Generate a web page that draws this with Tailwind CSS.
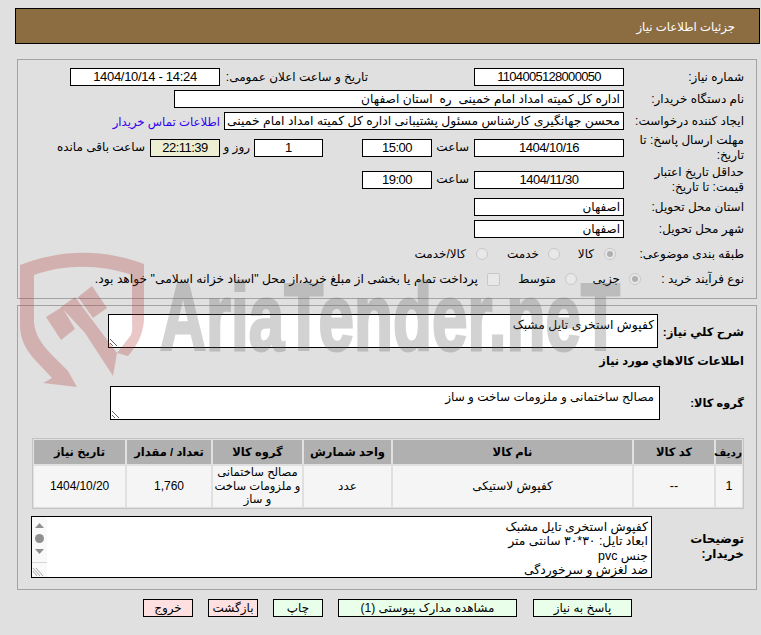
<!DOCTYPE html>
<html lang="fa" dir="rtl">
  <head>
    <meta charset="UTF-8" />
    <title>جزئیات اطلاعات نیاز</title>
    <script src="https://cdn.jsdelivr.net/npm/@tailwindcss/browser@4"></script>
  </head>
  <body class="relative h-[635px] overflow-hidden bg-[#e0e0e0] pt-2 text-[12px] leading-[15px] text-black [font-family:'Liberation_Sans','DejaVu_Sans',sans-serif]">
    <!-- header -->
    <div class="mr-px ml-[15px] flex h-9 items-center border border-black bg-[#8c6d42] pr-[24px] text-[11.7px] text-white">
      جزئیات اطلاعات نیاز
    </div>

    <!-- details -->
    <div class="mt-[15px] mr-1 ml-[17px] h-[240px] border border-[#a3a3a3] pt-2 pr-3">
      <div class="flex h-[18px] items-center">
        <div class="w-[120px]">شماره نیاز:</div>
        <div class="h-[18px] w-[150px] border border-black bg-white text-center text-[13px] leading-4 tracking-[-0.7px]">1104005128000050</div>
        <div class="mr-[106px] w-[148px] whitespace-nowrap">تاریخ و ساعت اعلان عمومی:</div>
        <div dir="ltr" class="h-[18px] w-[150px] border border-black bg-white text-center text-[13px] leading-4 tracking-[-0.3px]">1404/10/14 - 14:24</div>
      </div>

      <div class="mt-1 flex h-[18px] items-center">
        <div class="w-[120px]">نام دستگاه خریدار:</div>
        <div class="h-[18px] w-[450px] border border-black bg-white pr-[3px] text-[12.2px] leading-4">اداره کل کمیته امداد امام خمینی&nbsp; ره&nbsp; استان اصفهان</div>
      </div>

      <div class="mt-1 flex h-[18px] items-center">
        <div class="w-[120px]">ایجاد کننده درخواست:</div>
        <div class="h-[18px] w-[400px] overflow-hidden border border-black bg-white pr-[3px] text-[12.4px] leading-4 whitespace-nowrap">محسن جهانگیری کارشناس مسئول پشتیبانی اداره کل کمیته امداد امام خمینی</div>
        <a class="mr-1 text-[11.7px] whitespace-nowrap text-[#3300ee]">اطلاعات تماس خریدار</a>
      </div>

      <div class="mt-[4px] flex h-[27px] items-center">
        <div class="w-[120px]">مهلت ارسال پاسخ: تا تاریخ:</div>
        <div class="h-[18px] w-[150px] border border-black bg-white text-center text-[13px] leading-4 tracking-[-0.5px]">1404/10/16</div>
        <div class="w-[42px] pr-[5px]">ساعت</div>
        <div class="h-[18px] w-[70px] border border-black bg-white text-center text-[13px] leading-4 tracking-[-0.5px]">15:00</div>
        <div class="w-[39px]"></div>
        <div class="h-[18px] w-[69px] border border-black bg-white text-center text-[13px] leading-4">1</div>
        <div class="w-[34px] pr-[4px]">روز و</div>
        <div class="h-[18px] w-[70px] border border-black bg-[#eeeed2] text-center text-[13px] leading-4 tracking-[-0.5px]">22:11:39</div>
        <div class="pr-[5px] whitespace-nowrap">ساعت باقی مانده</div>
      </div>

      <div class="mt-[5px] flex h-[27px] items-center">
        <div class="w-[120px]">حداقل تاریخ اعتبار قیمت: تا تاریخ:</div>
        <div class="h-[18px] w-[150px] border border-black bg-white text-center text-[13px] leading-4 tracking-[-0.5px]">1404/11/30</div>
        <div class="w-[42px] pr-[5px]">ساعت</div>
        <div class="h-[18px] w-[70px] border border-black bg-white text-center text-[13px] leading-4 tracking-[-0.5px]">19:00</div>
      </div>

      <div class="mt-[5px] flex h-[18px] items-center">
        <div class="w-[120px]">استان محل تحویل:</div>
        <div class="h-[18px] w-[150px] border border-black bg-white pr-[3px] leading-4">اصفهان</div>
      </div>

      <div class="mt-1 flex h-[18px] items-center">
        <div class="w-[120px]">شهر محل تحویل:</div>
        <div class="h-[18px] w-[150px] border border-black bg-white pr-[3px] leading-4">اصفهان</div>
      </div>

      <div class="mt-[6px] flex h-[20px] items-center">
        <div class="w-[128px]">طبقه بندی موضوعی:</div>
        <div class="flex w-[56px] items-center gap-[10px]">
          <span class="flex size-3 items-center justify-center rounded-full border border-[#c8c8c8] bg-[#e8e8e8]"><span class="size-[6px] rounded-full bg-[#b0b0b0]"></span></span>
          <span>کالا</span>
        </div>
        <div class="flex w-[72px] items-center gap-[9px]">
          <span class="size-3 rounded-full border border-[#c8c8c8] bg-[#e8e8e8]"></span>
          <span>خدمت</span>
        </div>
        <div class="flex items-center gap-[10px]">
          <span class="size-3 rounded-full border border-[#c8c8c8] bg-[#e8e8e8]"></span>
          <span>کالا/خدمت</span>
        </div>
      </div>

      <div class="mt-[5px] flex h-[20px] items-center">
        <div class="w-[103px]">نوع فرآیند خرید :</div>
        <div class="flex w-[64px] items-center gap-[9px]">
          <span class="flex size-3 items-center justify-center rounded-full border border-[#c8c8c8] bg-[#e8e8e8]"><span class="size-[6px] rounded-full bg-[#b0b0b0]"></span></span>
          <span>جزیی</span>
        </div>
        <div class="flex w-[77px] items-center gap-[9px]">
          <span class="size-3 rounded-full border border-[#c8c8c8] bg-[#e8e8e8]"></span>
          <span>متوسط</span>
        </div>
        <div class="flex items-center gap-[9px]">
          <span class="size-[13px] rounded-[2px] border border-[#c8c8c8] bg-[#e8e8e8]"></span>
          <span class="text-[12.3px] whitespace-nowrap">پرداخت تمام یا بخشی از مبلغ خرید،از محل "اسناد خزانه اسلامی" خواهد بود.</span>
        </div>
      </div>
    </div>

    <!-- items -->
    <div class="mt-[6px] mr-1 ml-[17px] h-[285px] border border-[#a3a3a3] pt-2 pr-3">
      <div class="flex items-center">
        <div class="w-[86px] text-[11.7px] font-bold">شرح کلي نياز:</div>
        <textarea class="h-[34px] w-[550px] border border-black bg-white px-[3px] pt-[3px] text-[12.3px] leading-[15px]">کفپوش استخری تایل مشبک</textarea>
      </div>

      <div class="mt-[6px] h-4 text-[11.4px] font-bold">اطلاعات کالاهاي مورد نياز</div>

      <div class="mt-4 flex items-center">
        <div class="w-[84px] text-[11.4px] font-bold">گروه کالا:</div>
        <textarea class="h-[34px] w-[550px] border border-black bg-white px-[5px] pt-[3px] leading-[15px]">مصالح ساختمانی و ملزومات ساخت و ساز</textarea>
      </div>

      <table class="mt-[18px] w-[712px] table-fixed border-separate border-spacing-[2px] text-center ring-1 ring-[#c4c4c4] ring-inset">
        <thead>
          <tr class="h-[24px] bg-[#b0b0b0] text-[11.5px] font-bold">
            <th class="w-[26px] p-0 text-[10.5px]">ردیف</th>
            <th class="w-[80px] p-0">کد کالا</th>
            <th class="w-[239px] p-0">نام کالا</th>
            <th class="w-[87px] p-0">واحد شمارش</th>
            <th class="w-[89px] p-0">گروه کالا</th>
            <th class="w-[84px] p-0">تعداد / مقدار</th>
            <th class="p-0">تاریخ نیاز</th>
          </tr>
        </thead>
        <tbody>
          <tr class="h-[41px] bg-[#f5f5f5]">
            <td class="p-0 text-[12.5px]">1</td>
            <td class="p-0 text-[12.5px]">--</td>
            <td class="p-0">کفپوش لاستیکی</td>
            <td class="p-0">عدد</td>
            <td class="p-0 text-[11.5px] leading-[13.5px] whitespace-nowrap">مصالح ساختمانی<br />و ملزومات ساخت<br />و ساز</td>
            <td class="p-0 text-[12px]">1,760</td>
            <td class="p-0 text-[12px] tracking-[-0.1px]">1404/10/20</td>
          </tr>
        </tbody>
      </table>

      <div class="mt-[7px] flex items-center">
        <div class="w-[92px] font-bold"><div class="w-[60px]">توضیحات خریدار:</div></div>
        <div class="flex h-[62px] w-[621px] border border-black bg-white">
          <div class="flex-1 pt-[3px] pr-[3px] text-[12.4px] leading-[14.4px]">
            <div>کفپوش استخری تایل مشبک</div>
            <div>ابعاد تایل: ۳۰*۳۰ سانتی متر</div>
            <div>جنس pvc</div>
            <div>ضد لغزش و سرخوردگی</div>
          </div>
          <svg class="w-[15px] shrink-0 bg-[#f9f9f9]" width="15" height="60" viewBox="0 0 15 60">
            <path d="M3 11 L7.5 6 L12 11 Z" fill="#909090" />
            <circle cx="7.5" cy="21.5" r="4.5" fill="#909090" />
            <path d="M3 32 L12 32 L7.5 37 Z" fill="#909090" />
            <path d="M0 45.5 H15" stroke="#d8d8d8" />
            <path d="M1 51 L8 59 M1 54 L5 59 M4 51 L11 59" stroke="#808080" stroke-width="0.7" />
          </svg>
        </div>
      </div>
    </div>

    <!-- buttons -->
    <div class="mt-[9px] mr-[129px] flex gap-[15px]">
      <button class="h-[18px] w-[99px] border border-black bg-[#eaffea] leading-4">پاسخ به نیاز</button>
      <button class="mr-px h-[18px] w-[179px] border border-black bg-[#eaffea] leading-4">مشاهده مدارک پیوستی (1)</button>
      <button class="h-[18px] w-[50px] border border-black bg-[#eaffea] leading-4">چاپ</button>
      <button class="h-[18px] w-[50px] border border-black bg-[#ffe0e0] leading-4">بازگشت</button>
      <button class="h-[18px] w-[50px] border border-black bg-[#ffe0e0] leading-4">خروج</button>
    </div>

    <!-- watermark -->
    <svg class="pointer-events-none absolute top-0 left-0" width="761" height="635" viewBox="0 0 761 635">
      <g fill="#b03030" fill-opacity="0.27">
        <path d="M20 265 C60 249 105 249 144 264 L144 320 C143 336 136 347 128 356 L117 353 L131 335 C133 330 132 325 132 318 L132 275 C100 264 64 264 34 275 L34 322 C35 335 42 344 50 353 L68 371 L77 387 L43 383 L52 378 L36 361 C26 350 20 340 20 325 Z" />
        <path d="M46 317 L62 307 L75 329 L61 340 Z" />
        <path d="M61 307 L75 297 L117 353 L113 376 L85 333 Z" />
        <path d="M78 297 L92 286 L107 308 L93 318 Z" />
      </g>
      <text direction="ltr" x="160" y="350" font-size="94" font-weight="700" font-family="Liberation Sans" textLength="460" lengthAdjust="spacingAndGlyphs" fill="#606060" stroke="#606060" stroke-width="3" opacity="0.28">AriaTender.neT</text>
    </svg>
  </body>
</html>
